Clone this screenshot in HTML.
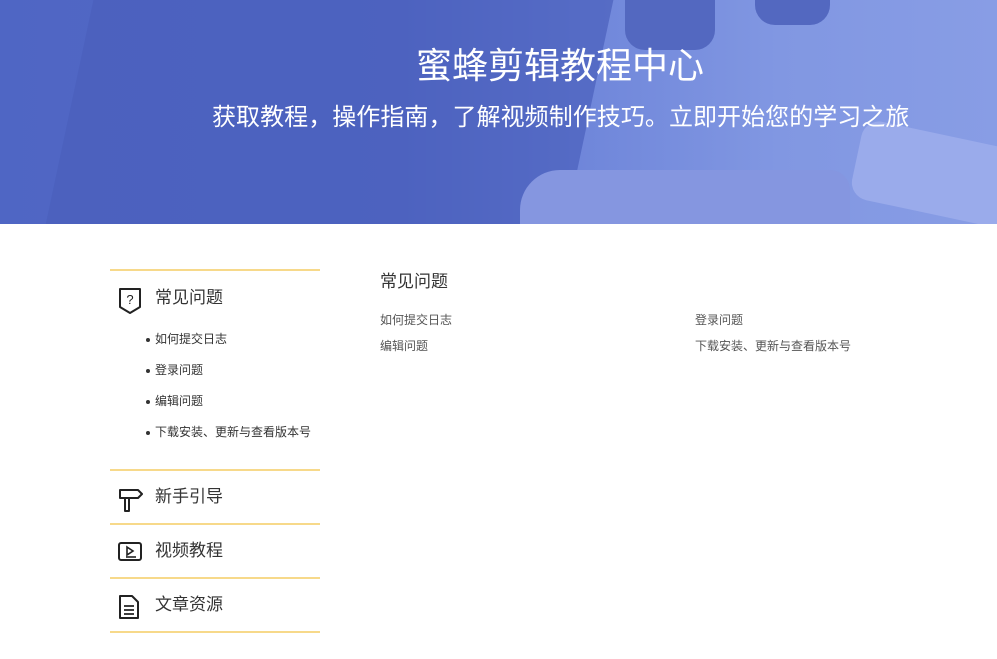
<!DOCTYPE html>
<html><head><meta charset="utf-8"><style>
*{margin:0;padding:0;box-sizing:border-box}
body{width:997px;height:659px;background:#fff;font-family:"Liberation Sans","Noto Sans CJK SC",sans-serif;position:relative;overflow:hidden;color:#333}
.hero{position:absolute;left:0;top:0;width:997px;height:224px;background:linear-gradient(90deg,#4f66c4 0%,#5469c6 40%,#6f86da 58%,#8197e2 78%,#889de5 100%);overflow:hidden}
.lap{position:absolute;left:70px;top:-40px;width:520px;height:300px;background:#4a5fbc;transform:skewX(-12deg);border-radius:10px;opacity:.7}
.hand{position:absolute;left:520px;top:170px;width:330px;height:60px;background:#8596e0;border-radius:40px 20px 0 0}
.phone{position:absolute;left:855px;top:135px;width:170px;height:80px;background:#9aabeb;border-radius:18px;transform:rotate(12deg)}
.cup{position:absolute;top:-10px;width:90px;height:60px;background:#5368c0;border-radius:0 0 20px 20px}
h1{position:absolute;left:0;width:1120px;text-align:center;top:44px;font-size:36px;font-weight:normal;color:#fff;line-height:44px}
h2{position:absolute;left:212px;top:102px;font-size:24px;font-weight:normal;color:#fff;line-height:32px;white-space:nowrap;letter-spacing:.05px}
.line{position:absolute;left:110px;width:210px;height:2px;background:#f7d98a}
.sec{position:absolute;left:155px;font-size:17px;color:#333;line-height:22px}
.ico{position:absolute;left:118px}
.sub{position:absolute;left:155px;font-size:12px;color:#333;line-height:16px}
.sub:before{content:"";position:absolute;left:-9px;top:7px;width:4px;height:4px;border-radius:50%;background:#333}
.ct{position:absolute;font-size:12px;color:#555;line-height:16px}
</style></head><body>
<div class="hero">
<div class="lap"></div>
<div class="cup" style="left:625px"></div><div class="cup" style="left:755px;width:75px;height:35px"></div>
<div class="hand"></div><div class="phone"></div>
<h1>蜜蜂剪辑教程中心</h1>
<h2>获取教程，操作指南，了解视频制作技巧。立即开始您的学习之旅</h2>
</div>
<div class="line" style="top:269px"></div>
<svg class="ico" style="top:287px" width="24" height="28" viewBox="0 0 24 28"><path d="M2 2h20v18l-10 6-10-6z" fill="none" stroke="#222" stroke-width="2" stroke-linejoin="round"/><text x="12" y="17" font-size="13" text-anchor="middle" fill="#222" font-family="Liberation Sans">?</text></svg>
<div class="sec" style="top:287px">常见问题</div>
<div class="sub" style="top:331px">如何提交日志</div>
<div class="sub" style="top:362px">登录问题</div>
<div class="sub" style="top:393px">编辑问题</div>
<div class="sub" style="top:424px">下载安装、更新与查看版本号</div>
<div class="line" style="top:469px"></div>
<svg class="ico" style="top:487px" width="26" height="26" viewBox="0 0 26 26"><path d="M2 3h18l4 4-4 4H2zM7 11v13h4V11" fill="none" stroke="#222" stroke-width="2" stroke-linejoin="round"/></svg>
<div class="sec" style="top:486px">新手引导</div>
<div class="line" style="top:523px"></div>
<svg class="ico" style="top:541px" width="24" height="22" viewBox="0 0 24 22"><rect x="1" y="2" width="22" height="17" rx="2" fill="none" stroke="#222" stroke-width="2"/><path d="M9 6l6 4-6 4z" fill="none" stroke="#222" stroke-width="1.6"/><path d="M8 16h10" stroke="#222" stroke-width="1.6"/></svg>
<div class="sec" style="top:540px">视频教程</div>
<div class="line" style="top:577px"></div>
<svg class="ico" style="top:594px" width="22" height="26" viewBox="0 0 22 26"><path d="M2 2h12l6 6v16H2z" fill="none" stroke="#222" stroke-width="2" stroke-linejoin="round"/><path d="M6 12h10M6 16h10M6 20h10" stroke="#222" stroke-width="1.8"/></svg>
<div class="sec" style="top:594px">文章资源</div>
<div class="line" style="top:631px"></div>
<div class="sec" style="left:380px;top:271px">常见问题</div>
<div class="ct" style="left:380px;top:312px">如何提交日志</div>
<div class="ct" style="left:695px;top:312px">登录问题</div>
<div class="ct" style="left:380px;top:338px">编辑问题</div>
<div class="ct" style="left:695px;top:338px">下载安装、更新与查看版本号</div>
</body></html>
